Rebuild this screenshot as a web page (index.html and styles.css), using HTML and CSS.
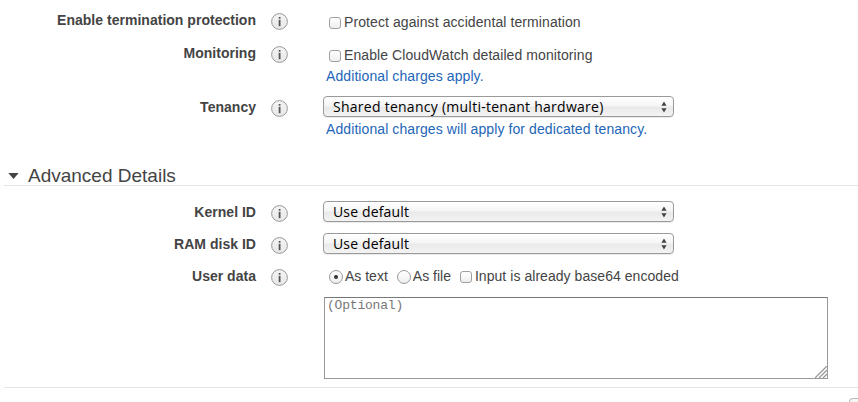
FILE: index.html
```html
<!DOCTYPE html>
<html lang="en">
<head>
<meta charset="utf-8">
<title>Configure Instance Details</title>
<link rel="stylesheet" href="styles.css">
</head>
<body>
<svg class="defs" width="0" height="0" aria-hidden="true">
  <defs>
    <linearGradient id="g" x1="0" y1="0" x2="0" y2="1"><stop offset="0" stop-color="#f4f4f4"/><stop offset="1" stop-color="#e8e8e8"/></linearGradient>
    <symbol id="info" viewBox="0 0 18 18"><circle cx="8.5" cy="8.5" r="7.9" fill="url(#g)" stroke="#999" stroke-width="1"/><rect x="7.7" y="4" width="1.8" height="1.7" fill="#555"/><rect x="7.7" y="6.8" width="1.8" height="6.4" fill="#555"/></symbol>
    <symbol id="arrows" viewBox="0 0 6 12"><path d="M3 0.5L5.6 4.7H0.4zM3 11.5L5.6 7.3H0.4z" fill="#444"/></symbol>
  </defs>
</svg>
<main class="form">
  <div class="row">
    <div class="label">Enable termination protection</div>
    <svg class="info"><use href="#info"/></svg>
    <div class="field">
      <label class="option"><span class="check"></span><span class="text">Protect against accidental termination</span></label>
    </div>
  </div>
  <div class="row row-monitoring">
    <div class="label">Monitoring</div>
    <svg class="info"><use href="#info"/></svg>
    <div class="field">
      <label class="option"><span class="check"></span><span class="text">Enable CloudWatch detailed monitoring</span></label>
      <a class="link">Additional charges apply.</a>
    </div>
  </div>
  <div class="row row-tenancy">
    <div class="label">Tenancy</div>
    <svg class="info"><use href="#info"/></svg>
    <div class="field">
      <div class="select"><span class="tenancy-value">Shared tenancy (multi-tenant hardware)</span><svg class="arrows"><use href="#arrows"/></svg></div>
      <a class="link">Additional charges will apply for dedicated tenancy.</a>
    </div>
  </div>
  <h2 class="heading"><svg class="caret" viewBox="0 0 12 7"><path d="M0 0H12L6 7z" fill="#444"/></svg><span>Advanced Details</span></h2>
  <div class="row row-select">
    <div class="label">Kernel ID</div>
    <svg class="info"><use href="#info"/></svg>
    <div class="field"><div class="select"><span>Use default</span><svg class="arrows"><use href="#arrows"/></svg></div></div>
  </div>
  <div class="row row-select">
    <div class="label">RAM disk ID</div>
    <svg class="info"><use href="#info"/></svg>
    <div class="field"><div class="select"><span>Use default</span><svg class="arrows"><use href="#arrows"/></svg></div></div>
  </div>
  <div class="row row-data">
    <div class="label">User data</div>
    <svg class="info"><use href="#info"/></svg>
    <div class="field">
      <div class="options">
        <label class="option"><span class="radio on"></span><span>As text</span></label>
        <label class="option"><span class="radio"></span><span>As file</span></label>
        <label class="option"><span class="check"></span><span class="encoded">Input is already base64 encoded</span></label>
      </div>
      <div class="textarea">(Optional)<svg class="grip" viewBox="0 0 12 12"><path d="M0 12L12 0M4 12L12 4M8 12L12 8" stroke="#999" stroke-width="1.3"/></svg></div>
    </div>
  </div>
  <footer class="footer"><div class="button"></div></footer>
</main>
</body>
</html>
```
FILE: styles.css
```css
* { box-sizing: border-box; }
body {
  margin: 0;
  background: #fff;
  color: #444;
  font: 14px/18px "Liberation Sans", Arial, sans-serif;
}
.defs { position: absolute; }
.form { height: 402px; padding-top: 4px; overflow: hidden; }
.row {
  display: grid;
  grid-template-columns: 256px 18px 1fr;
  align-items: start;
  height: 33px;
}
.row-monitoring { height: 54px; }
.row-tenancy { height: 71px; }
.row-select { height: 32px; }
.row-data { height: 127px; }
.label { padding-top: 7px; text-align: right; font-weight: bold; letter-spacing: .02px; white-space: nowrap; }
.info { width: 18px; height: 18px; margin: 9px 0 0 15px; }
.field { padding-left: 49px; }
.option { display: flex; align-items: center; height: 18px; white-space: nowrap; }
.field > .option { margin: 9px 0 0 6px; }
.text { letter-spacing: .085px; }
.encoded { letter-spacing: .05px; }
.check {
  width: 12px;
  height: 12px;
  margin: 2px 3px 0 0;
  border: 1px solid #a0a0a0;
  border-radius: 3px;
  background: linear-gradient(#fff, #eee);
}
.link { display: block; margin: 3px 0 0 3px; color: #1e66b8; letter-spacing: .09px; white-space: nowrap; }
.select {
  display: flex;
  align-items: center;
  justify-content: space-between;
  width: 351px;
  height: 21px;
  margin-top: 5px;
  padding: 0 6px 0 9px;
  border: 1px solid #9a9a9a;
  border-radius: 4px;
  background: linear-gradient(#fff, #f5f5f5 48%, #e9e9e9 52%, #f3f3f3);
  color: #000;
  font: 14px/19px "Open Sans", "Noto Sans", sans-serif;
  letter-spacing: .15px;
  box-shadow: 0 1px 0 rgba(0, 0, 0, .08);
}
.tenancy-value { letter-spacing: .26px; }
.arrows { width: 6px; height: 12px; }
.heading {
  display: flex;
  align-items: center;
  height: 20px;
  margin: 4px 0 10px 4px;
  padding-left: 4px;
  border-bottom: 1px solid #e5e5e5;
  font-size: 19px;
  font-weight: normal;
}
.caret { width: 11px; height: 6px; margin-right: 9px; }
.options { display: flex; gap: 9px; margin: 7px 0 0 6px; }
.radio {
  display: flex;
  width: 14px;
  height: 14px;
  margin: 1px 2px 0 0;
  border: 1px solid #999;
  border-radius: 50%;
  background: linear-gradient(#fff, #eee);
}
.on::after { content: ""; width: 4px; height: 4px; margin: auto; border-radius: 50%; background: #333; }
.textarea {
  position: relative;
  width: 504px;
  height: 82px;
  margin: 12px 0 0 1px;
  padding: 0 2px;
  border: 1px solid #999;
  border-top-color: #777;
  color: #777;
  font: 13px/15px "Liberation Mono", monospace;
  letter-spacing: -.2px;
}
.grip { position: absolute; right: 0; bottom: 0; width: 12px; height: 12px; }
.footer { margin-left: 4px; border-top: 1px solid #e5e5e5; }
.button {
  width: 9px;
  height: 4px;
  margin: 10px 0 0 845px;
  border: solid #bbb;
  border-width: 1px 0 0 1px;
  border-top-left-radius: 4px;
  background: #f5f5f5;
}
```
